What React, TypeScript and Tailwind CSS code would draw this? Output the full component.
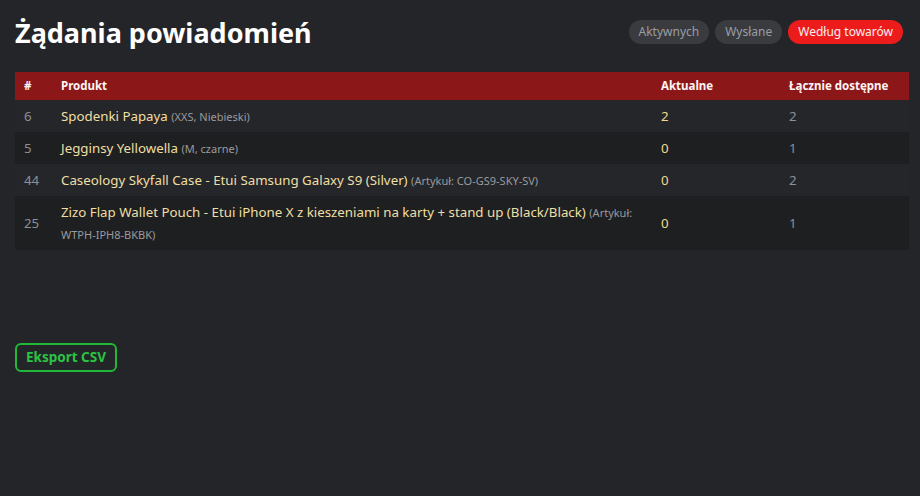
import React from "react";

type Row = {
  id: number;
  name: string;
  detail: string;
  current: number;
  total: number;
};

const rows: Row[] = [
  { id: 6, name: "Spodenki Papaya", detail: "(XXS, Niebieski)", current: 2, total: 2 },
  { id: 5, name: "Jegginsy Yellowella", detail: "(M, czarne)", current: 0, total: 1 },
  {
    id: 44,
    name: "Caseology Skyfall Case - Etui Samsung Galaxy S9 (Silver)",
    detail: "(Artykuł: CO-GS9-SKY-SV)",
    current: 0,
    total: 2,
  },
  {
    id: 25,
    name: "Zizo Flap Wallet Pouch - Etui iPhone X z kieszeniami na karty + stand up (Black/Black)",
    detail: "(Artykuł: WTPH-IPH8-BKBK)",
    current: 0,
    total: 1,
  },
];

const tabs = ["Aktywnych", "Wysłane", "Według towarów"];

export default function App() {
  return (
    <div
      className="min-h-[496px] bg-[#242528] pl-[15px] pr-[11px] text-white"
      style={{ fontFamily: '"Noto Sans", "Open Sans", sans-serif' }}
    >
      {/* header */}
      <div className="flex items-center justify-between pt-[6px] h-[58px]">
        <h1 className="text-[27px] font-bold leading-none">Żądania powiadomień</h1>
        <div className="flex gap-[6px] mr-[6px]">
          {tabs.map((t, i) => (
            <button
              key={t}
              className={`h-[24px] px-[10px] rounded-full text-[12px] ${
                i === 2 ? "bg-[#ec1c1c] text-[#ffeeee]" : "bg-[#3a3b3f] text-[#9b9ea4]"
              }`}
            >
              {t}
            </button>
          ))}
        </div>
      </div>

      {/* table */}
      <table className="mt-[14px] w-full border-collapse table-fixed">
        <colgroup>
          <col className="w-[37px]" />
          <col className="w-[600px]" />
          <col className="w-[128px]" />
          <col />
        </colgroup>
        <thead>
          <tr className="bg-[#8c1719] h-[28px] text-[11.5px] font-bold text-left text-[#fff4f4]">
            <th className="pl-[9px] font-bold">#</th>
            <th className="pl-[9px] font-bold">Produkt</th>
            <th className="pl-[9px] font-bold">Aktualne</th>
            <th className="pl-[9px] font-bold">Łącznie dostępne</th>
          </tr>
        </thead>
        <tbody>
          {rows.map((r, i) => (
            <tr key={r.id} className={i % 2 === 1 ? "bg-[#1e1f21]" : "bg-[#252629]"}>
              <td className="pl-[9px] py-0 h-[32px] text-[13.3px] leading-[20px] text-[#8a8f98] align-middle">{r.id}</td>
              <td className="pl-[9px] pr-[7px] py-[5px] text-[13.3px] leading-[22px] text-[#eedfa4] align-middle">
                {r.name} <span className="text-[11px] leading-[0] text-[#9a9a9e]">{r.detail}</span>
              </td>
              <td className="pl-[9px] py-0 text-[13.3px] leading-[20px] text-[#f2d88e] align-middle">{r.current}</td>
              <td className="pl-[9px] py-0 text-[13.3px] leading-[20px] text-[#8a8f98] align-middle">{r.total}</td>
            </tr>
          ))}
        </tbody>
      </table>

      <div className="mt-[93px]">
        <button className="h-[29px] w-[102px] rounded-[6px] border-2 border-[#21b83a] text-[#2cc345] text-[13.5px] font-bold">
          Eksport CSV
        </button>
      </div>
    </div>
  );
}
